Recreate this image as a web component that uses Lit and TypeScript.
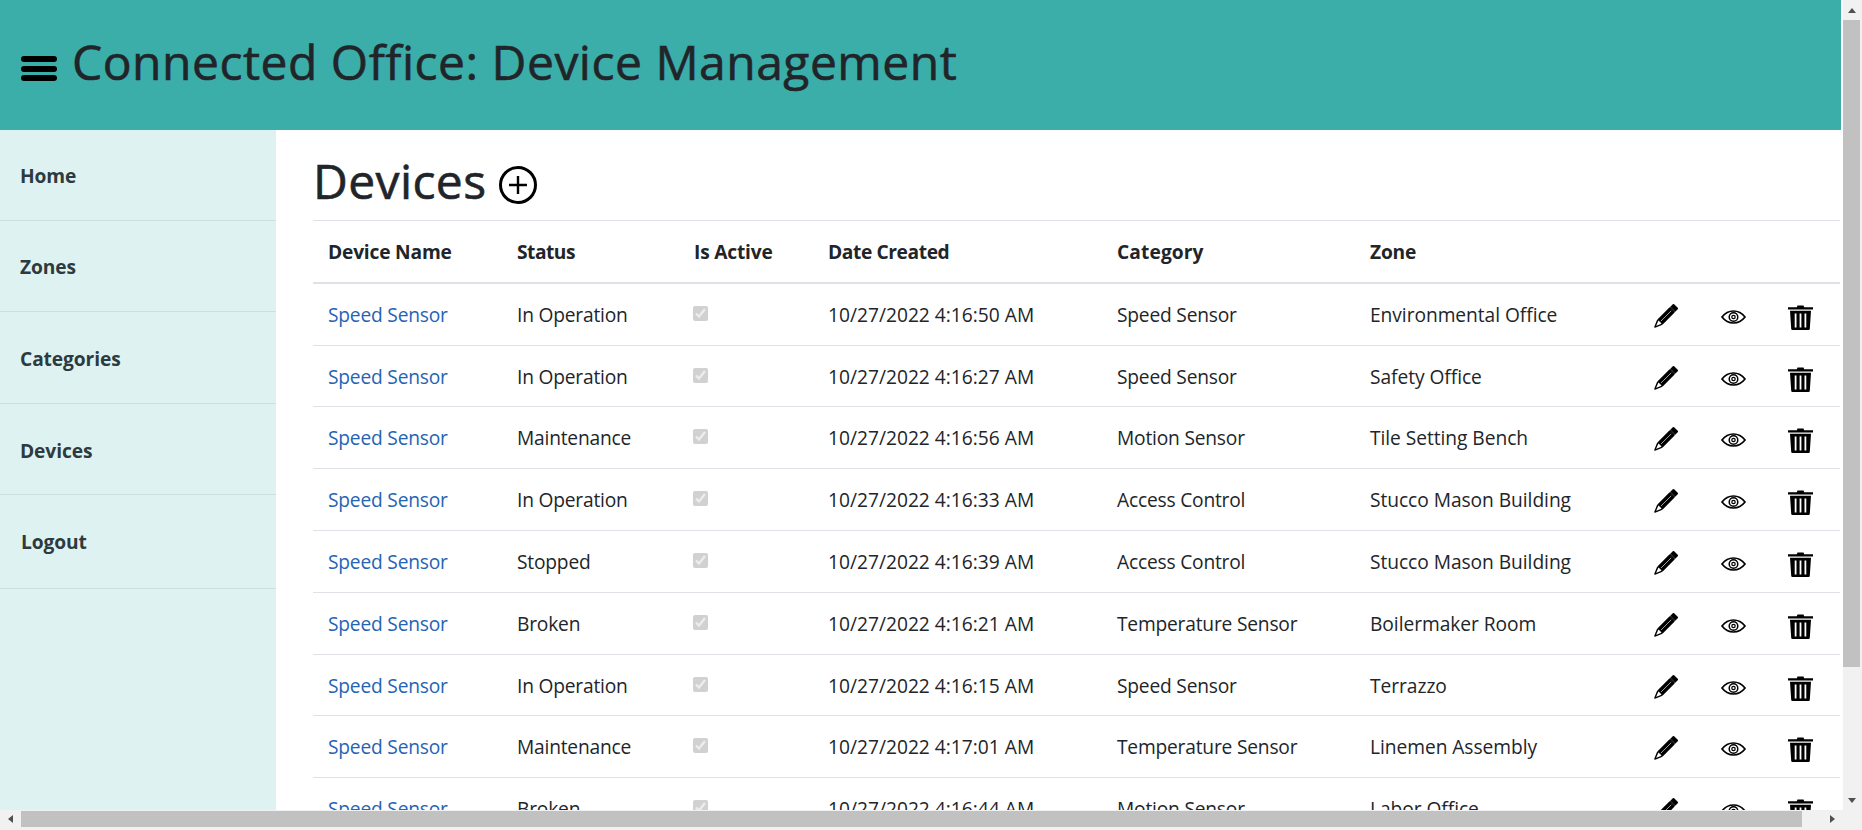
import { LitElement, html, css, svg } from "lit";
import { customElement } from "lit/decorators.js";

const rows = [
  ["In Operation", "10/27/2022 4:16:50 AM", "Speed Sensor", "Environmental Office"],
  ["In Operation", "10/27/2022 4:16:27 AM", "Speed Sensor", "Safety Office"],
  ["Maintenance", "10/27/2022 4:16:56 AM", "Motion Sensor", "Tile Setting Bench"],
  ["In Operation", "10/27/2022 4:16:33 AM", "Access Control", "Stucco Mason Building"],
  ["Stopped", "10/27/2022 4:16:39 AM", "Access Control", "Stucco Mason Building"],
  ["Broken", "10/27/2022 4:16:21 AM", "Temperature Sensor", "Boilermaker Room"],
  ["In Operation", "10/27/2022 4:16:15 AM", "Speed Sensor", "Terrazzo"],
  ["Maintenance", "10/27/2022 4:17:01 AM", "Temperature Sensor", "Linemen Assembly"],
  ["Broken", "10/27/2022 4:16:44 AM", "Motion Sensor", "Labor Office"],
];
const nav = ["Home", "Zones", "Categories", "Devices", "Logout"];

const pencil = svg`<svg class="ic pencil" viewBox="0 0 23 23"><g transform="rotate(-45 11.5 11.5)"><path d="M-3.500 11.500 3.200 8.700H21v5.600H3.200z" fill="#fff" stroke="#000" stroke-width="1.400" stroke-linejoin="round"/><path d="M3.800 8h16.700v7H3.800z" fill="#000"/><path d="M5 11.500h14.500" stroke="#fff" stroke-width=".6"/><path d="M21.800 8h3.500a1 1 0 0 1 1 1v5a1 1 0 0 1-1 1h-3.500z" fill="#000"/></g></svg>`;
const eye = svg`<svg class="ic eye" viewBox="0 0 25 14" fill="none" stroke="#000"><path stroke-width="1.700" d="M1 7c3-3.900 7-6 11.500-6S21 3.100 24 7c-3 3.900-7 6-11.500 6S4 10.900 1 7z"/><circle cx="12.500" cy="7" r="4.300" stroke-width="1.500"/><circle cx="12.500" cy="7" r="1.700" stroke-width="1.200"/></svg>`;
const trash = svg`<svg class="ic trash" viewBox="0 0 25 25" fill="#000"><path d="M8.800 2.300 9.500.5h6l.7 1.800H25v2.100H0V2.300zM2 5.700h21l-1.200 18a1.300 1.300 0 0 1-1.300 1.300h-16a1.300 1.300 0 0 1-1.300-1.300zM6.700 8.500v14h1.800v-14zM11.600 8.500v14h1.800v-14zM16.500 8.500v14h1.800v-14z" fill-rule="evenodd"/></svg>`;

@customElement("app-root")
export class AppRoot extends LitElement {
  static styles = css`
    :host {
      display: grid;
      grid-template-columns: 1843px 19px;
      grid-template-rows: 810px 20px;
      width: 1862px;
      height: 830px;
      overflow: hidden;
      font-family: "Open Sans", "Noto Sans", sans-serif;
      font-size: 19.2px;
      line-height: 1.5;
      color: #212529;
      background: #fff;
    }
    .viewport { display: flex; flex-direction: column; overflow: hidden; min-width: 0; }
    header {
      flex: none;
      height: 130px;
      margin-right: 2px;
      background: #3caea9;
      display: flex;
      align-items: center;
      gap: 15px;
      padding: 0 0 6px 21px;
      box-sizing: border-box;
    }
    header h1 { margin: 0; font-size: 48px; font-weight: 400; line-height: 1.2; letter-spacing: 0.5px; -webkit-text-stroke: 0.6px #212529; }
    .bars { width: 36px; height: 25px; margin-top: 13px; display: flex; flex-direction: column; justify-content: space-between; }
    .bars span { display: block; height: 6px; border-radius: 3px; background: #000; }
    .body { flex: 1; display: flex; min-height: 0; }
    nav { flex: none; width: 276px; background: #def3f1; }
    nav a {
      display: flex;
      align-items: center;
      height: 91.600px;
      box-sizing: border-box;
      padding: 4px 20px 0;
      border-bottom: 1px solid #c9e2e0;
      font-weight: 700;
      letter-spacing: -0.1px;
      color: #2d3a3f;
    }
    nav a:first-child { height: 90.500px; padding-top: 3px; }
    nav a:last-child { height: 94px; padding: 2px 20px 0 21px; }
    main { flex: 1; min-width: 0; padding: 0 3px 0 37px; overflow: hidden; }
    .title { display: flex; align-items: center; gap: 12px; height: 90px; padding-top: 12px; box-sizing: border-box; }
    .title h2 { margin: 0; font-size: 48px; font-weight: 400; line-height: 1.2; letter-spacing: 0.4px; -webkit-text-stroke: 0.6px #212529; }
    .plus { width: 38px; height: 38px; margin-top: 7px; color: #000; }
    table { width: 1527px; border-collapse: collapse; table-layout: fixed; border-top: 1px solid #dee2e6; }
    th, td { text-align: left; padding: 17px 15px 15px; font-size: 19.2px; line-height: 28.800px; white-space: nowrap; letter-spacing: -0.2px; vertical-align: top; }
    th { font-weight: 700; border-bottom: 2px solid #dee2e6; }
    td { border-bottom: 1px solid #dee2e6; }
    td.date { letter-spacing: 0; }
    td.zone { letter-spacing: -0.05px; }
    th.date { letter-spacing: -0.4px; }
    th.status { letter-spacing: -0.5px; }
    th.cat { letter-spacing: 0.1px; }
    td a { color: #2563b4; }
    td.act { padding: 21px 0 0 15px; }
    td.act-pencil { padding-left: 14px; }
    td.act-eye { padding-top: 26px; }
    .ic { display: block; overflow: visible; }
    .pencil { width: 23px; height: 23px; }
    .eye { width: 25px; height: 14px; }
    .trash { width: 25px; height: 25px; }
    input { display: block; width: 15px; height: 15px; margin: 5px 0 0 -1px; }
    .vbar, .hbar, .corner { background: #f1f1f1; }
    .vbar { display: flex; flex-direction: column; padding-right: 2px; }
    .btn { flex: none; display: flex; align-items: center; justify-content: center; }
    .vbar .btn { height: 20px; width: 100%; }
    .vthumb { width: 100%; height: 647px; background: #c1c1c1; }
    .spacer { flex: 1; }
    .hbar { display: flex; align-items: center; padding: 1px 0 3px; box-sizing: border-box; }
    .hbar .btn { width: 21px; height: 100%; }
    .hthumb { width: 1781px; height: 100%; background: #c1c1c1; }
    .tri { width: 0; height: 0; border-style: solid; border-color: transparent; }
    .tri.up { border-width: 0 4px 5px; border-bottom-color: #505050; }
    .tri.down { border-width: 5px 4px 0; border-top-color: #505050; }
    .tri.left { border-width: 4px 5px 4px 0; border-right-color: #505050; }
    .tri.right { border-width: 4px 0 4px 5px; border-left-color: #505050; }
  `;

  render() {
    return html`
      <div class="viewport">
        <header>
          <div class="bars"><span></span><span></span><span></span></div>
          <h1>Connected Office: Device Management</h1>
        </header>
        <div class="body">
          <nav>${nav.map((n) => html`<a>${n}</a>`)}</nav>
          <main>
            <div class="title">
              <h2>Devices</h2>
              <svg class="plus" viewBox="0 0 38 38" fill="none" stroke="currentColor">
                <circle cx="19" cy="19" r="17.500" stroke-width="3"/>
                <path d="M19 10v18M10 19h18" stroke-width="2.400"/>
              </svg>
            </div>
            <table>
              <colgroup>
                <col style="width:189px"/><col style="width:177px"/><col style="width:134px"/>
                <col style="width:289px"/><col style="width:253px"/><col style="width:285px"/>
                <col style="width:66px"/><col style="width:67px"/><col style="width:67px"/>
              </colgroup>
              <thead>
                <tr>
                  <th>Device Name</th><th class="status">Status</th><th>Is Active</th><th class="date">Date Created</th>
                  <th class="cat">Category</th><th>Zone</th><th></th><th></th><th></th>
                </tr>
              </thead>
              <tbody>
                ${rows.map(
                  (r) => html`<tr>
                    <td><a>Speed Sensor</a></td>
                    <td>${r[0]}</td>
                    <td><input type="checkbox" checked disabled /></td>
                    <td class="date">${r[1]}</td>
                    <td>${r[2]}</td>
                    <td class="zone">${r[3]}</td>
                    <td class="act act-pencil">${pencil}</td>
                    <td class="act act-eye">${eye}</td>
                    <td class="act">${trash}</td>
                  </tr>`
                )}
              </tbody>
            </table>
          </main>
        </div>
      </div>
      <div class="vbar">
        <div class="btn"><span class="tri up"></span></div>
        <div class="vthumb"></div>
        <div class="spacer"></div>
        <div class="btn"><span class="tri down"></span></div>
      </div>
      <div class="hbar">
        <div class="btn"><span class="tri left"></span></div>
        <div class="hthumb"></div>
        <div class="spacer"></div>
        <div class="btn"><span class="tri right"></span></div>
      </div>
      <div class="corner"></div>
    `;
  }
}
